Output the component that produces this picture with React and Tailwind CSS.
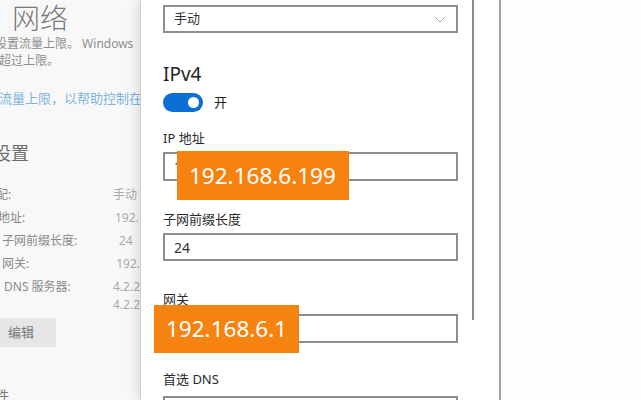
const font = { fontFamily: '"Noto Sans", "Noto Sans CJK SC", sans-serif' };

const rows = [
  { label: '配:', value: '手动', ml: '-ml-[4px]', h: 'h-[23px]' },
  { label: '地址:', value: '192.', ml: '-ml-[2px]', h: 'h-[23px]' },
  { label: '子网前缀长度:', value: '24', ml: 'ml-[2px]', h: 'h-[23px]' },
  { label: '网关:', value: '192.', ml: 'ml-[2px]', h: 'h-[23px]' },
  { label: 'DNS 服务器:', value: '4.2.2', ml: 'ml-[4px]', h: 'h-[18px]' },
  { label: '', value: '4.2.2', ml: 'ml-0', h: 'h-[17px]' },
];

const Field = ({ label, value, labelMt, inputMt, h }) => (
  <>
    <p className={`${labelMt} text-[13px] leading-[18px] text-[#2b2b2b]`}>{label}</p>
    <div
      className={`${inputMt} ${h} w-[295px] border-2 border-[#8d8d8d] flex items-center pl-[9px] text-[14px] text-[#333]`}
    >
      {value}
    </div>
  </>
);

const App = () => {
  return (
    <div className="relative flex h-[400px] w-[641px] overflow-hidden bg-white" style={font}>
      {/* settings page behind the dialog */}
      <div className="w-[140px] shrink-0 overflow-hidden bg-[#f8f8f8] whitespace-nowrap">
        <h1 className="ml-[12px] mt-[1px] text-[28px] leading-[34px] font-light text-[#7a7a7a]">网络</h1>
        <p className="-ml-[5px] text-[12px] leading-[17px] text-[#8e8e8e]">设置流量上限。 Windows</p>
        <p className="-ml-[1px] text-[12px] leading-[17px] text-[#8e8e8e]">超过上限。</p>
        <p className="-ml-[1px] mt-[21px] text-[13px] leading-[17px] text-[#7eb5e0]">流量上限，以帮助控制在</p>
        <h2 className="-ml-[7px] mt-[34px] text-[18px] leading-[24px] text-[#6f6f6f]">设置</h2>
        <div className="mt-[21px]">
          {rows.map((r, i) => (
            <div key={i} className={`flex text-[12px] ${r.h} leading-[17px] text-[#8a8a8a]`}>
              <span className={`w-[117px] ${r.ml}`}>{r.label}</span>
              <span className="text-[#ababab]">{r.value}</span>
            </div>
          ))}
        </div>
        <div className="mt-[5px] flex h-[29px] w-[56px] items-center bg-[#e6e6e6] pl-[8px] text-[13px] text-[#7a7a7a]">
          编辑
        </div>
        <p className="-ml-[4px] mt-[40px] text-[13px] leading-[17px] text-[#777]">件</p>
      </div>

      {/* adapter settings dialog */}
      <div className="flex w-[361px] shrink-0 items-start border-l border-r-2 border-l-[#cfcfcf] border-r-[#a0a0a0] bg-white shadow-[0_0_14px_rgba(0,0,0,0.18)]">
        <div className="w-[318px] shrink-0 pl-[22px]">
          <div className="mt-[5px] flex h-[28px] w-[295px] items-center justify-between border-2 border-[#8d8d8d] pl-[9px] pr-[10px] text-[13px] text-[#333]">
            <span>手动</span>
            <svg width="12" height="7" viewBox="0 0 12 7" fill="none" stroke="#a5a5a5" strokeWidth="1">
              <path d="M1 1l5 5 5-5" />
            </svg>
          </div>
          <p className="mt-[29px] text-[19px] leading-[24px] text-[#222]">IPv4</p>
          <div className="mt-[7px] flex items-center">
            <div className="flex h-[19px] w-[40px] items-center justify-end rounded-full bg-[#0b6fd4] pr-[4px]">
              <div className="h-[11px] w-[11px] rounded-full bg-white" />
            </div>
            <span className="ml-[11px] text-[13px] leading-[19px] text-[#222]">开</span>
          </div>
          <Field label="IP 地址" value="192.168.6.199" labelMt="mt-[17px]" inputMt="mt-[5px]" h="h-[29px]" />
          <Field label="子网前缀长度" value="24" labelMt="mt-[29px]" inputMt="mt-[5px]" h="h-[28px]" />
          <Field label="网关" value="192.168.6.1" labelMt="mt-[29px]" inputMt="mt-[6px]" h="h-[29px]" />
          <Field label="首选 DNS" value="" labelMt="mt-[27px]" inputMt="mt-[8px]" h="h-[29px]" />
        </div>
        <div className="ml-[13px] h-[320px] w-[2px] shrink-0 bg-[#8c8c8c]" />
      </div>

      <div className="flex-1 bg-[#fdfdfd]" />

      {/* orange annotations */}
      <div className="absolute left-[177px] top-[151px] flex h-[49px] w-[172px] items-center bg-[#f6830f] pl-[12px] text-[22.5px] text-white">
        192.168.6.199
      </div>
      <div className="absolute left-[154px] top-[305px] flex h-[48px] w-[145px] items-center bg-[#f6830f] pl-[12px] text-[22.5px] text-white">
        192.168.6.1
      </div>
    </div>
  );
};

export default App;
